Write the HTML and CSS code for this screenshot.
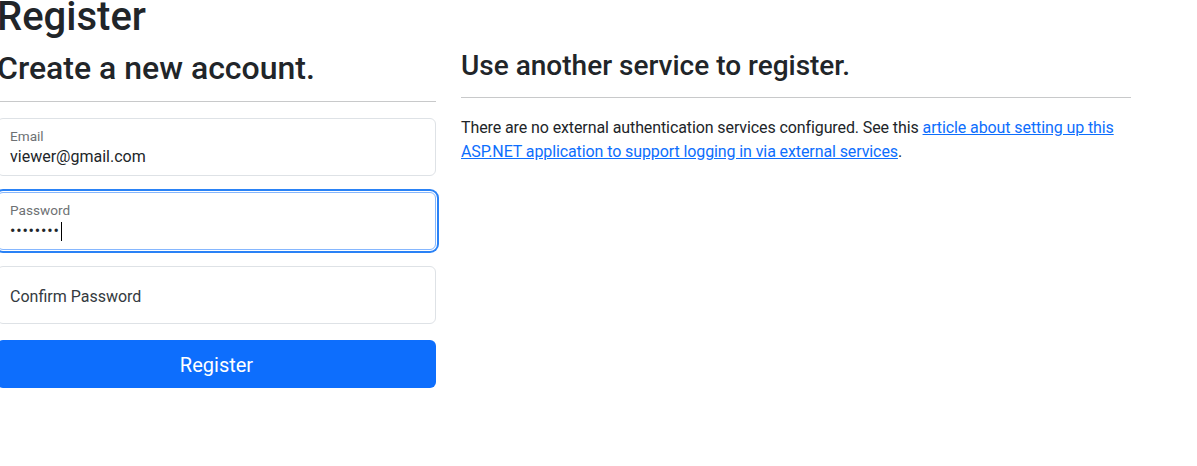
FILE: index.html
```html
<!DOCTYPE html>
<html lang="en">
<head>
<meta charset="utf-8">
<title>Register</title>
<link rel="stylesheet" href="styles.css">
</head>
<body>
<main class="page">
  <h1 class="title">Register</h1>
  <div class="row">
    <section class="col-left">
      <h2 class="subtitle">Create a new account.</h2>
      <hr class="rule">
      <div class="field">
        <span class="field-label">Email</span>
        <span class="field-value">viewer@gmail.com</span>
      </div>
      <div class="field field-focus">
        <span class="field-label">Password</span>
        <span class="field-value"><span class="dots">••••••••</span><span class="caret"></span></span>
      </div>
      <div class="field field-empty">
        <span class="field-placeholder">Confirm Password</span>
      </div>
      <button class="btn-register" type="button">Register</button>
    </section>
    <section class="col-right">
      <h3 class="side-title">Use another service to register.</h3>
      <hr class="rule">
      <p class="side-text">There are no external authentication services configured. See this <a class="side-link" href="#">article about setting up this ASP.NET application to support logging in via external services</a>.</p>
    </section>
  </div>
</main>
</body>
</html>
```
FILE: styles.css
```css
html, body {
  margin: 0;
  padding: 0;
  background: #fff;
}
body {
  font-family: "Segoe UI", Roboto, "Liberation Sans", sans-serif;
  font-size: 16px;
  line-height: 1.5;
  color: #212529;
  overflow: hidden;
}
.page {
  margin: -7px 0 0 -3px;
}
.title {
  font-size: 40px;
  font-weight: 500;
  line-height: 1.2;
  margin: 0 0 8px;
}
.row {
  display: flex;
  align-items: flex-start;
  gap: 25px;
}
.col-left {
  width: 439px;
  flex: none;
}
.col-right {
  width: 670px;
  flex: none;
}
.subtitle {
  font-size: 32px;
  font-weight: 500;
  line-height: 1.2;
  margin: 0 0 8px;
}
.side-title {
  font-size: 28px;
  font-weight: 500;
  line-height: 1.2;
  margin: 0 0 8px;
}
.rule {
  border: 0;
  border-top: 1px solid #c8c9ca;
  margin: 14px 0 16px;
  height: 0;
}
.field {
  box-sizing: border-box;
  height: 58px;
  border: 1px solid #dee2e6;
  border-radius: 6px;
  padding: 9px 12px 0;
  margin-bottom: 16px;
  display: flex;
  flex-direction: column;
  background: #fff;
}
.field-label {
  font-size: 13.6px;
  line-height: 17px;
  color: #6e7174;
}
.field-value {
  font-size: 16px;
  line-height: 20px;
  margin-top: 2px;
  color: #212529;
  display: flex;
  align-items: center;
}
.dots {
  letter-spacing: 0.8px;
  font-size: 16px;
}
.caret {
  width: 1px;
  height: 19px;
  background: #000;
  margin-left: 1px;
}
.field-focus {
  border-color: #86b7fe;
  box-shadow: 0 0 0 1px #fff, 0 0 0 3px #2a82f6;
}
.field-empty {
  padding: 3px 12px 0;
  justify-content: center;
}
.field-placeholder {
  font-size: 16px;
  line-height: 24px;
  color: #343a40;
}
.btn-register {
  display: block;
  width: 100%;
  height: 48px;
  border: 0;
  border-radius: 6px;
  background: #0d6efd;
  color: #fff;
  font-family: inherit;
  font-size: 20px;
  line-height: 1.5;
  padding: 2px 0 0;
}
.side-text {
  margin: 0;
  padding-top: 2px;
  letter-spacing: -0.1px;
}
.side-link {
  color: #0d6efd;
  text-decoration: underline;
}
```
